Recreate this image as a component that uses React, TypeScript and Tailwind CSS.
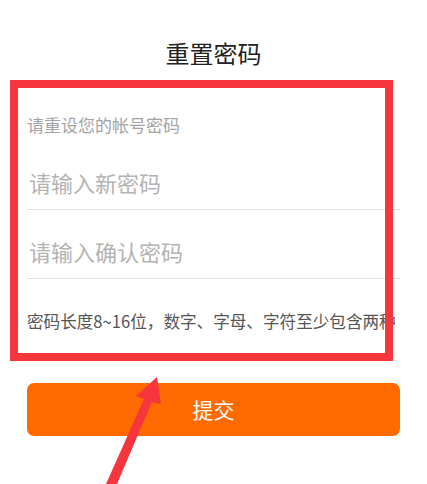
import React from "react";

export default function App() {
  const font = { fontFamily: '"Noto Sans CJK SC", "Noto Sans", sans-serif' };
  return (
    <div className="relative w-[427px] h-[484px] overflow-hidden bg-white" style={font}>
      <div className="flex flex-col px-[27px]">
        <h1 className="mt-[37px] h-[32px] text-center text-[24px] leading-[32px] text-[#222222] font-normal">
          重置密码
        </h1>
        <p className="mt-[46px] h-[20px] text-[17px] leading-[20px] text-[#a3a3a3]">
          请重设您的帐号密码
        </p>
        <div className="mt-[6px] flex h-[69px] items-center border-b border-[#e3e3e3] pt-[13px] pl-[2px]">
          <span className="text-[22px] leading-[28px] text-[#b3b3b3]">请输入新密码</span>
        </div>
        <div className="flex h-[69px] items-center border-b border-[#e3e3e3] pt-[13px] pl-[2px]">
          <span className="text-[22px] leading-[28px] text-[#b3b3b3]">请输入确认密码</span>
        </div>
        <p className="mt-[31px] h-[22px] whitespace-nowrap text-[16.6px] leading-[22px] text-[#555555]">
          密码长度8~16位，数字、字母、字符至少包含两种
        </p>
        <button className="mt-[51px] flex h-[53px] w-full items-center justify-center rounded-[7px] bg-[#ff6a00] text-[21px] text-white">
          提交
        </button>
      </div>

      <div className="absolute left-[10px] top-[80px] h-[281px] w-[383px] border-[8px] border-[#f5363c]" />

      <svg className="absolute left-0 top-0" width="427" height="484" viewBox="0 0 427 484">
        <polygon
          points="106,484 117,484 152,402 161,404 157,377 136,396 144,399"
          fill="#f5363c"
        />
      </svg>
    </div>
  );
}
